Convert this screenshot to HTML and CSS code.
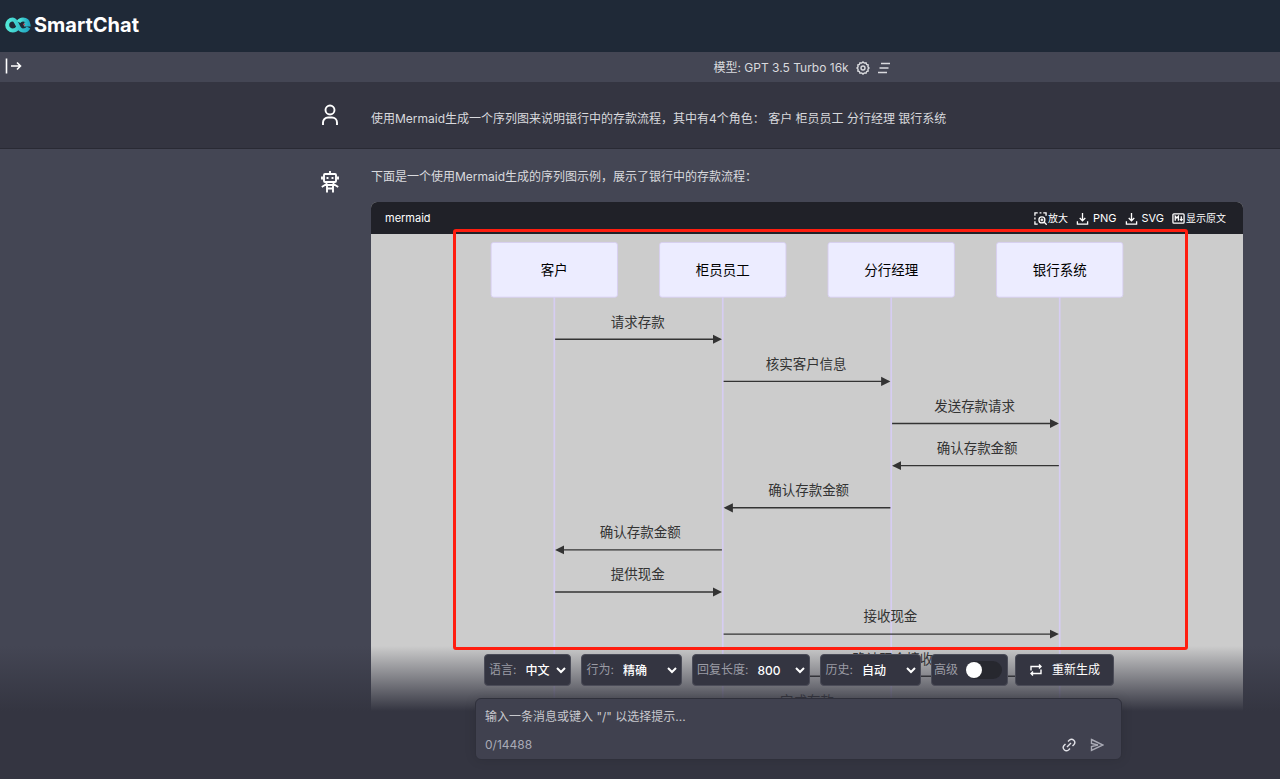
FILE: index.html
```html
<!DOCTYPE html>
<html lang="zh-CN">
<head>
<meta charset="utf-8">
<meta name="viewport" content="width=device-width, initial-scale=1">
<title>SmartChat</title>
<link rel="stylesheet" href="styles.css">
</head>
<body>
<header class="brand">
  <svg class="brand-logo" viewBox="0 0 26 16" aria-hidden="true">
    <defs><linearGradient id="teal" x1="0" x2="1"><stop offset="0" stop-color="#52e8d8"/><stop offset="1" stop-color="#22a9c4"/></linearGradient></defs>
    <g fill="none" stroke="url(#teal)" stroke-width="4">
      <path d="M13 10.5C11.500 13 9.500 13.600 7.800 13.600A5.600 5.600 0 1 1 7.800 2.400C12.500 2.400 12 13.600 18 13.600C20.500 13.600 22.500 12.500 23.500 10.500"/>
      <path d="M13.500 5C14.500 3.200 16 2.400 18 2.400C21 2.400 23 4.200 23.400 7.500H19"/>
    </g>
    <circle cx="19" cy="7.400" r="1" fill="#b04a5c" stroke="none"/>
  </svg>
  <h1 class="brand-name">SmartChat</h1>
</header>

<nav class="model-bar">
  <button class="icon-button" type="button" aria-label="展开侧栏">
    <svg class="icon-expand" viewBox="0 0 16 16"><path d="M1 0.500v15M5.500 8h9.500M11.500 4.500L15 8l-3.500 3.500"/></svg>
  </button>
  <div class="model">
    <span>模型: GPT 3.5 Turbo 16k</span>
    <button class="icon-button" type="button" aria-label="设置">
      <svg class="icon-model" viewBox="0 0 14 14"><path d="M7 1l1.300 1.100L10 1.800l.6 1.600 1.600.6-.3 1.700L13 7l-1.100 1.300.3 1.700-1.600.6-.6 1.600-1.700-.3L7 13l-1.300-1.100-1.700.3-.6-1.600-1.600-.6.3-1.700L1 7l1.100-1.300L1.800 4l1.600-.6L4 1.800l1.700.3z"/><circle cx="7" cy="7" r="2"/></svg>
    </button>
    <button class="icon-button" type="button" aria-label="清除对话">
      <svg class="icon-model" viewBox="0 0 14 14"><path d="M4 2.500h9M2.500 7h9M1 11.500h9"/></svg>
    </button>
  </div>
</nav>

<main class="conversation">
  <section class="message message-user">
    <div class="message-inner">
      <svg class="avatar" viewBox="0 0 20 24" aria-label="用户"><circle cx="10" cy="7" r="4.500"/><path d="M3 22v-2.500a5 5 0 0 1 5-5h4a5 5 0 0 1 5 5V22"/></svg>
      <p class="message-text">使用Mermaid生成一个序列图来说明银行中的存款流程，其中有4个角色： 客户 柜员员工 分行经理 银行系统</p>
    </div>
  </section>
  <section class="message message-bot">
    <div class="message-inner">
      <svg class="avatar" viewBox="0 0 20 24" aria-label="助手"><path d="M10 1v3M5 4h10a1 1 0 0 1 1 1v6a1 1 0 0 1-1 1H5a1 1 0 0 1-1-1V5a1 1 0 0 1 1-1zM2 6.500v3M18 6.500v3M6.500 12v3h7v-3M6.500 14L1.800 17M13.500 14l4.700 3M7 15v7.500M13 15v7.500M7 18.500h6"/><path d="M7.500 7v2M12.500 7v2"/></svg>
      <div class="message-body">
        <p class="message-text">下面是一个使用Mermaid生成的序列图示例，展示了银行中的存款流程：</p>
        <figure class="code-panel">
          <figcaption class="code-head">
            <span>mermaid</span>
            <div class="code-actions">
              <button class="code-action code-action-zh" type="button"><svg class="icon-code" viewBox="0 0 14 14"><path d="M1 4V1h3M6 1h2M10 1h3v3M1 6v2M1 10v3h3"/><circle cx="8.500" cy="8.500" r="3.200"/><path d="M11 11l2.700 2.700M7 8.500h3M8.500 7v3"/></svg>放大</button>
              <button class="code-action" type="button"><svg class="icon-code" viewBox="0 0 14 14"><path d="M7 1v8M4 6.500l3 3 3-3M1.500 10v3h11v-3"/></svg>PNG</button>
              <button class="code-action" type="button"><svg class="icon-code" viewBox="0 0 14 14"><path d="M7 1v8M4 6.500l3 3 3-3M1.500 10v3h11v-3"/></svg>SVG</button>
              <button class="code-action code-action-zh" type="button"><svg class="icon-code" viewBox="0 0 14 14"><rect x="1" y="2" width="12" height="10" rx="1"/><path d="M3.500 9.500v-5l1.700 2 1.700-2v5M10 4.500v4.500M8.500 7.700L10 9.300l1.500-1.600"/></svg>显示原文</button>
            </div>
          </figcaption>
          <svg class="diagram" viewBox="-50 -10 850 680" role="img" aria-label="存款流程序列图">
            <defs>
              <marker id="arrow" refX="9" refY="6" markerWidth="12" markerHeight="12" markerUnits="userSpaceOnUse" orient="auto"><path class="arrow-head" d="M0 0.500L11 6L0 11.500z"/></marker>
            </defs>
            <g class="lifelines"><path d="M75 65v600M275 65v600M475 65v600M675 65v600"/></g>
            <g class="actors">
              <rect width="150" height="65" rx="3"/><rect x="200" width="150" height="65" rx="3"/><rect x="400" width="150" height="65" rx="3"/><rect x="600" width="150" height="65" rx="3"/>
            </g>
            <g class="actor-names">
              <text x="75" y="39">客户</text><text x="275" y="39">柜员员工</text><text x="475" y="39">分行经理</text><text x="675" y="39">银行系统</text>
            </g>
            <g class="signals">
              <path d="M76 115H272"/><path d="M276 165H472"/><path d="M476 215H672"/><path d="M674 265H478"/><path d="M474 315H278"/><path d="M274 365H78"/><path d="M76 415H272"/><path d="M276 465H672"/><path d="M674 515H278"/><path d="M674 565H78"/>
            </g>
            <g class="signal-names">
              <text x="174" y="100">请求存款</text><text x="374" y="150">核实客户信息</text><text x="574" y="200">发送存款请求</text><text x="577" y="250">确认存款金额</text><text x="377" y="300">确认存款金额</text><text x="177" y="350">确认存款金额</text><text x="174" y="400">提供现金</text><text x="474" y="450">接收现金</text><text x="477" y="500">确认现金接收</text><text x="375" y="550">完成存款</text>
            </g>
          </svg>
          <div class="highlight"></div>
        </figure>
      </div>
    </div>
  </section>
</main>

<form class="composer">
  <div class="composer-inner">
    <div class="options">
      <label class="option">语言:<select class="option-select"><option>中文</option></select></label>
      <label class="option">行为:<select class="option-select option-wide"><option>精确</option></select></label>
      <label class="option">回复长度:<select class="option-select option-medium"><option>800</option></select></label>
      <label class="option">历史:<select class="option-select option-wide"><option>自动</option></select></label>
      <div class="option-end">
        <label class="option option-toggle">高级<input class="toggle" type="checkbox"></label>
        <button class="regenerate" type="button"><svg class="icon-model" viewBox="0 0 14 14"><path d="M2 7.500V3.500h10M10 1.500l2 2-2 2M12 6.500v4H2M4 8.500l-2 2 2 2"/></svg>重新生成</button>
      </div>
    </div>
    <div class="prompt">
      <textarea class="prompt-input" rows="1" aria-label="消息" placeholder="输入一条消息或键入 &quot;/&quot; 以选择提示..."></textarea>
      <div class="prompt-foot">
        <span>0/14488</span>
        <div class="prompt-actions">
          <button class="icon-button" type="button" aria-label="链接"><svg class="icon-model" viewBox="0 0 14 14"><path d="M6 3.500l1.500-1.500a3.200 3.200 0 0 1 4.500 4.500L10.500 8M8 10.500L6.500 12A3.200 3.200 0 0 1 2 7.500L3.500 6M5 9l4-4"/></svg></button>
          <button class="icon-button icon-muted" type="submit" aria-label="发送"><svg class="icon-model" viewBox="0 0 14 14"><path d="M1.500 1.500L13 7 1.500 12.500V8.500L8 7 1.500 5.500z"/></svg></button>
        </div>
      </div>
    </div>
  </div>
</form>
</body>
</html>
```
FILE: styles.css
```css
* { box-sizing: border-box; }

body {
  margin: 0;
  height: 100vh;
  display: flex;
  flex-direction: column;
  position: relative;
  overflow: hidden;
  background: #343541;
  color: #d9dade;
  font: 12px/20px Inter, "Noto Sans CJK SC", sans-serif;
}

button, select, textarea { font: inherit; color: inherit; }
button { cursor: pointer; }

svg { fill: none; stroke: currentColor; stroke-width: 1.4; }

.icon-button {
  display: flex;
  padding: 0;
  border: 0;
  background: none;
}
.icon-muted { color: #a9aab5; }
.icon-model { width: 14px; height: 14px; flex: none; }
.icon-code { width: 13px; height: 13px; flex: none; }

.brand {
  flex: none;
  display: flex;
  align-items: center;
  gap: 3px;
  height: 52px;
  padding: 0 5px 2px;
  background: #1f2937;
}
.brand-logo { width: 26px; height: 16px; }
.brand-name {
  margin: 0;
  color: #fff;
  font-size: 20px;
  line-height: 28px;
  font-weight: 700;
}

.model-bar {
  flex: none;
  display: flex;
  align-items: center;
  height: 30px;
  padding-left: 5px;
  background: #444654;
}
.icon-expand { width: 17px; height: 16px; color: #fff; stroke-width: 1.6; margin-bottom: 2px; }
.model {
  display: flex;
  align-items: center;
  gap: 7px;
  margin-left: 54%;
  padding: 2px 0 0 3px;
}

.conversation {
  flex: 1;
  min-height: 0;
  overflow: hidden;
  background: #444654;
}
.message-inner {
  display: flex;
  gap: 31px;
  margin: 0 37px 0 25%;
}
.message-user {
  padding: 21px 0 17px;
  background: #343541;
  border-bottom: 1px solid #292a34;
}
.message-user .message-text { padding-top: 6px; }
.message-bot { padding-top: 18px; }
.message-bot .avatar { margin-top: 3px; }
.avatar {
  flex: none;
  width: 20px;
  height: 24px;
  color: #fff;
  stroke-width: 1.9;
}
.message-body { flex: 1; min-width: 0; }
.message-text { margin: 0; }
.message-user .message-inner { min-height: 28px; }

.code-panel {
  position: relative;
  margin: 15px 0 0;
  border-radius: 6px 6px 0 0;
  background: #ccc;
}
.code-head {
  display: flex;
  align-items: center;
  justify-content: space-between;
  height: 32px;
  padding: 0 17px 0 14px;
  border-radius: 6px 6px 0 0;
  background: #202128;
  color: #fff;
  font-size: 11px;
}
.code-actions { display: flex; gap: 8px; }
.code-action {
  display: flex;
  align-items: center;
  gap: 4px;
  padding: 0;
  border: 0;
  background: none;
}
.code-action-zh { gap: 1px; font-size: 10px; }

.diagram {
  display: block;
  width: 100%;
  max-width: 716px;
  margin: 0 auto;
  font-size: 16px;
  text-anchor: middle;
}
.diagram text { stroke: none; }
.actors { fill: #ececff; stroke: #d6cdf2; stroke-width: 1; }
.lifelines { stroke: #d6cdf2; stroke-width: 2; }
.actor-names { fill: #000; }
.signals { stroke: #333; stroke-width: 1.6; }
.signals path { marker-end: url(#arrow); }
.signal-names { fill: #333; }
.arrow-head { fill: #333; stroke: none; }

.highlight {
  position: absolute;
  z-index: 20;
  top: 27px;
  left: 82px;
  right: 55px;
  height: 421px;
  border: 3px solid #ff1d0f;
  border-radius: 3px;
  pointer-events: none;
}

.composer {
  position: absolute;
  z-index: 10;
  left: 0;
  right: 0;
  bottom: 0;
  padding: 8px 0 19px;
  background: linear-gradient(rgba(52, 53, 65, 0), #343541 65px);
}
.composer-inner { margin: 0 158px 0 475px; }
.options {
  display: flex;
  gap: 10px;
  padding: 0 9px 12px;
}
.option-end { display: flex; gap: 7px; }
.option {
  display: flex;
  align-items: center;
  flex: none;
  height: 32px;
  padding: 0 1px 0 4px;
  border: 1px solid #4b4c58;
  border-radius: 4px;
  background: #343541;
  color: #9b9ca5;
}
.option-select {
  width: 48px;
  margin-left: 5px;
  padding: 0;
  border: 0;
  background: transparent;
  color: #fff;
  font-weight: 500;
}
.option-wide { width: 61px; }
.option-medium { width: 55px; }
.option-toggle { gap: 8px; padding: 0 5px 0 2px; }
.toggle {
  appearance: none;
  display: flex;
  align-items: center;
  width: 36px;
  height: 18px;
  margin: 0;
  border-radius: 9px;
  background: #27282f;
}
.toggle::before {
  content: "";
  width: 16px;
  height: 16px;
  border-radius: 50%;
  background: #fff;
}
.toggle:checked { justify-content: flex-end; }
.regenerate {
  display: flex;
  align-items: center;
  flex: none;
  gap: 9px;
  height: 32px;
  padding: 0 13px;
  border: 1px solid #4b4c58;
  border-radius: 4px;
  background: #343541;
  color: #fff;
}

.prompt {
  padding: 8px 17px 4px 9px;
  border: 1px solid #2f303b;
  border-radius: 6px;
  background: #40414f;
  box-shadow: 0 0 12px rgba(0, 0, 0, 0.1);
}
.prompt-input {
  display: block;
  width: 100%;
  height: 20px;
  padding: 0;
  border: 0;
  resize: none;
  outline: 0;
  overflow: hidden;
  background: none;
}
.prompt-input::placeholder { color: #c8c9ce; }
.prompt-foot {
  display: flex;
  align-items: center;
  justify-content: space-between;
  padding-top: 8px;
  color: #a9aab5;
}
.prompt-actions { display: flex; gap: 14px; color: #e2e2e8; }
```
